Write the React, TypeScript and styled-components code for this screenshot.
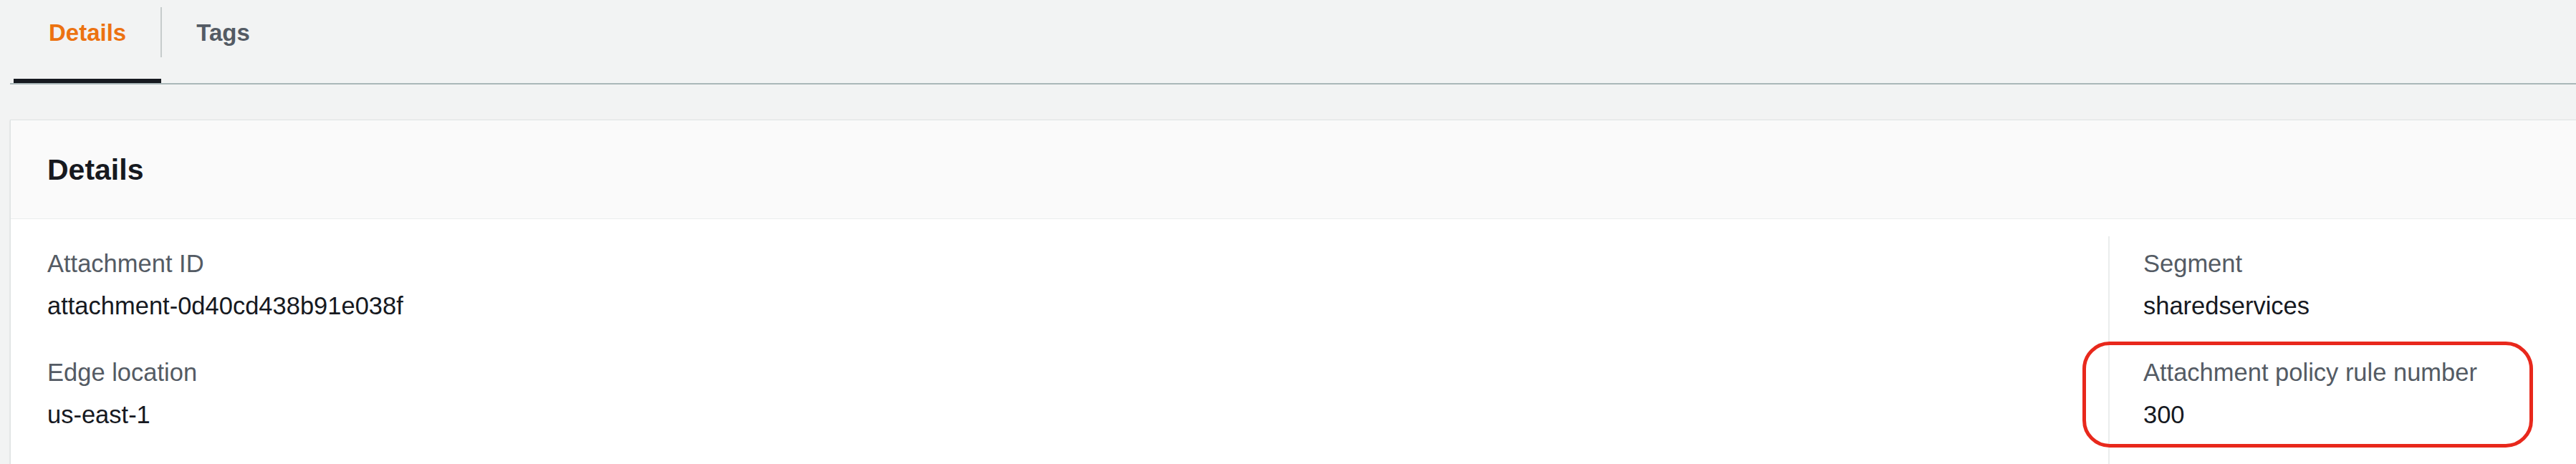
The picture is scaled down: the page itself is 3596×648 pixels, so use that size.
import React from 'react';
import styled, { createGlobalStyle } from 'styled-components';

type Field = {
    label: string;
    value: string;
    highlighted?: boolean;
};

const leftFields: Field[] = [
    { label: 'Attachment ID', value: 'attachment-0d40cd438b91e038f' },
    { label: 'Edge location', value: 'us-east-1' },
];

const rightFields: Field[] = [
    { label: 'Segment', value: 'sharedservices' },
    { label: 'Attachment policy rule number', value: '300', highlighted: true },
];

const App = (): JSX.Element => {
    return (
        <Page>
            <GlobalStyle />
            <TabList>
                <Tab $active>Details</Tab>
                <Tab>Tags</Tab>
            </TabList>
            <Panel>
                <PanelHeader>
                    <PanelTitle>Details</PanelTitle>
                </PanelHeader>
                <PanelBody>
                    <Column>
                        {leftFields.map((f) => (
                            <FieldBlock key={f.label}>
                                <FieldLabel>{f.label}</FieldLabel>
                                <FieldValue>{f.value}</FieldValue>
                            </FieldBlock>
                        ))}
                    </Column>
                    <Column $divided>
                        {rightFields.map((f) => (
                            <FieldBlock key={f.label}>
                                {f.highlighted && <Highlight />}
                                <FieldLabel>{f.label}</FieldLabel>
                                <FieldValue>{f.value}</FieldValue>
                            </FieldBlock>
                        ))}
                    </Column>
                </PanelBody>
            </Panel>
        </Page>
    );
};

const GlobalStyle = createGlobalStyle`
    html, body {
        margin: 0;
        padding: 0;
        overflow: hidden;
        background-color: #f2f3f3;
        font-family: "Liberation Sans", Arial, sans-serif;
    }
`;

const Page = styled.div`
    width: 3596px;
    height: 648px;
    overflow: hidden;
    background-color: #f2f3f3;
`;

const TabList = styled.div`
    display: flex;
    margin-left: 14px;
    padding-left: 5px;
    border-bottom: 2px solid #aab7b8;
`;

const Tab = styled.div<{ $active?: boolean }>`
    position: relative;
    padding: 26px 49px 44px;
    font-size: 33px;
    line-height: 40px;
    font-weight: bold;
    color: ${(p) => (p.$active ? '#ec7211' : '#545b64')};
    border-bottom: 6px solid ${(p) => (p.$active ? '#16191f' : 'transparent')};

    &:not(:last-child)::after {
        content: '';
        position: absolute;
        right: -1px;
        top: 10px;
        width: 2px;
        height: 70px;
        background-color: #c6cccc;
    }
`;

const Panel = styled.div`
    margin: 49px -40px 0 14px;
    background-color: #ffffff;
    border: 1px solid #dfe3e3;
    box-shadow: 0 1px 2px rgba(0, 28, 36, 0.15);
`;

const PanelHeader = styled.div`
    padding: 44px 51px 43px;
    background-color: #fafafa;
    border-bottom: 1px solid #eaeded;
`;

const PanelTitle = styled.h2`
    margin: 0;
    font-size: 41px;
    line-height: 50px;
    font-weight: bold;
    color: #16191f;
`;

const PanelBody = styled.div`
    display: grid;
    grid-template-columns: 2877px 1fr;
    padding: 24px 0 60px 51px;
    min-height: 400px;
`;

const Column = styled.div<{ $divided?: boolean }>`
    display: flex;
    flex-direction: column;
    gap: 49px;
    padding-top: 16px;
    padding-left: ${(p) => (p.$divided ? '47px' : '0')};
    border-left: ${(p) => (p.$divided ? '2px solid #eaeded' : 'none')};
`;

const FieldBlock = styled.div`
    position: relative;
    display: flex;
    flex-direction: column;
    gap: 15px;
`;

const FieldLabel = styled.div`
    font-size: 34.5px;
    line-height: 44px;
    color: #545b64;
    white-space: nowrap;
`;

const FieldValue = styled.div`
    font-size: 34.5px;
    line-height: 44px;
    color: #16191f;
    white-space: nowrap;
`;

const Highlight = styled.div`
    position: absolute;
    top: -21px;
    left: -85px;
    width: 629px;
    height: 148px;
    box-sizing: border-box;
    border: 5px solid #e8281c;
    border-radius: 38px;
    pointer-events: none;
`;

export default App;
